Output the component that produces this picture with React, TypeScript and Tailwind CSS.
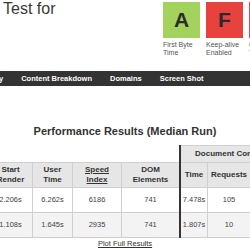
import React from "react";

type Grade = { letter: string; label: string; color: string };

const grades: Grade[] = [
  { letter: "A", label: "First Byte Time", color: "bg-[#a3d35d]" },
  { letter: "F", label: "Keep-alive Enabled", color: "bg-[#e8423f]" },
  { letter: "F", label: "Compress Transfer", color: "bg-[#e8423f]" },
];

const tabs = ["Summary", "Content Breakdown", "Domains", "Screen Shot"];

const rows = [
  { start: "2.206s", user: "6.262s", speed: "6186", dom: "741", time: "7.478s", requests: "105", bytes: "2,351 KB" },
  { start: "1.108s", user: "1.645s", speed: "2935", dom: "741", time: "1.807s", requests: "10", bytes: "158 KB" },
];

// left side of the table (before the thick divider)
const leftCols = ["w-[44px]", "w-[40px]", "w-[49px]", "w-[57px]"];
const rightCols = ["w-[27px]", "w-[43px]", "w-[36px]"];

const Cell: React.FC<{ w: string; last?: boolean; className?: string; children?: React.ReactNode }> = ({
  w,
  last,
  className = "",
  children,
}) => (
  <div
    className={`${w} shrink-0 flex items-center justify-center text-center border-t border-[#cfcfcf] ${
      last ? "" : "border-r"
    } ${className}`}
  >
    {children}
  </div>
);

export default function App() {
  return (
    <div className="w-[250px] h-[250px] overflow-hidden bg-white text-[#333] font-['Liberation_Sans',Arial,sans-serif]">
      {/* header */}
      <div className="h-[71px] flex">
        <div className="w-[163px] shrink-0 pl-[3px] text-[16px] leading-[18px] text-[#3a3a3a]">Test for</div>
        <div className="flex gap-[6px] pt-[2px]">
          {grades.map((g, i) => (
            <div key={i} className="w-[37px] shrink-0">
              <div
                className={`${g.color} h-[36px] flex items-center justify-center text-[21px] font-bold text-[#2b2b2b]`}
              >
                {g.letter}
              </div>
              <div className="mt-[3px] text-[7px] leading-[8px] text-[#555]">{g.label}</div>
            </div>
          ))}
        </div>
      </div>

      {/* tabs */}
      <div className="h-[15px] bg-[#333] flex items-center gap-[18px] ml-[-31px] whitespace-nowrap">
        {tabs.map((t) => (
          <span key={t} className="text-[7.5px] font-bold text-white">
            {t}
          </span>
        ))}
      </div>

      <h2 className="mt-[39px] text-center text-[11px] leading-[13px] font-bold text-[#333]">
        Performance Results (Median Run)
      </h2>

      {/* results table */}
      <div className="mt-[7px] ml-[-11px] flex text-[7.5px] text-[#444]">
        <div className="flex flex-col">
          <div className="h-[17px]" />
          <div className="flex h-[25px] font-bold text-[8px] leading-[10px] text-[#333] bg-[#e6e6e6]">
            <Cell w={leftCols[0]}>
              Start
              <br />
              Render
            </Cell>
            <Cell w={leftCols[1]}>
              User
              <br />
              Time
            </Cell>
            <Cell w={leftCols[2]}>
              <span className="underline">
                Speed
                <br />
                Index
              </span>
            </Cell>
            <Cell w={leftCols[3]} last>
              DOM
              <br />
              Elements
            </Cell>
          </div>
          {rows.map((r, i) => (
            <div
              key={i}
              className={`flex h-[25px] ${i === 1 ? "bg-[#f3f3f3] h-[26px] border-b border-[#cfcfcf]" : ""}`}
            >
              <Cell w={leftCols[0]}>{r.start}</Cell>
              <Cell w={leftCols[1]}>{r.user}</Cell>
              <Cell w={leftCols[2]}>{r.speed}</Cell>
              <Cell w={leftCols[3]} last>
                {r.dom}
              </Cell>
            </div>
          ))}
        </div>

        <div className="flex flex-col border-l-2 border-[#333]">
          <div className="h-[17px] flex items-center justify-center bg-[#e6e6e6] border-t border-[#cfcfcf] font-bold text-[8px] text-[#333] whitespace-nowrap">
            Document Complete
          </div>
          <div className="flex h-[25px] font-bold text-[8px] leading-[10px] text-[#333] bg-[#e6e6e6]">
            <Cell w={rightCols[0]}>Time</Cell>
            <Cell w={rightCols[1]}>Requests</Cell>
            <Cell w={rightCols[2]}>Bytes In</Cell>
          </div>
          {rows.map((r, i) => (
            <div
              key={i}
              className={`flex h-[25px] ${i === 1 ? "bg-[#f3f3f3] h-[26px] border-b border-[#cfcfcf]" : ""}`}
            >
              <Cell w={rightCols[0]}>{r.time}</Cell>
              <Cell w={rightCols[1]}>{r.requests}</Cell>
              <Cell w={rightCols[2]}>{r.bytes}</Cell>
            </div>
          ))}
        </div>
      </div>

      <div className="mt-[1px] text-center text-[7.5px] leading-[10px]">
        <a className="underline text-[#333]">Plot Full Results</a>
      </div>
    </div>
  );
}
